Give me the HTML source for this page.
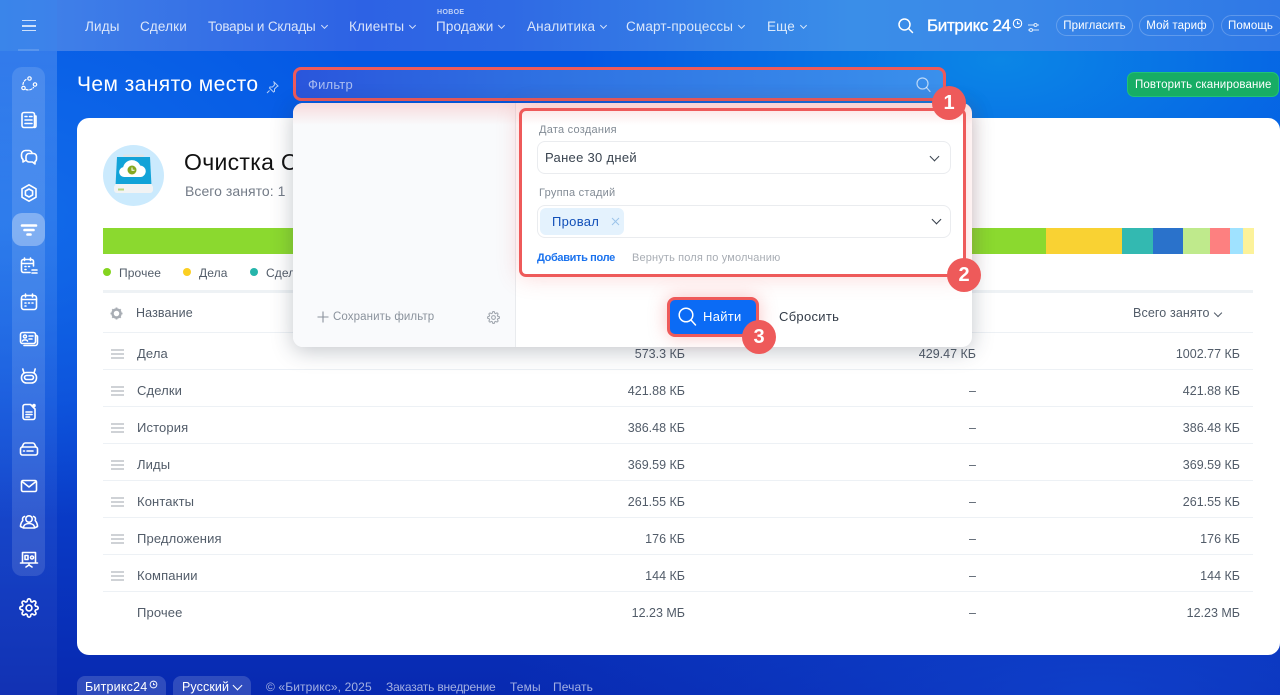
<!DOCTYPE html>
<html lang="ru"><head><meta charset="utf-8"><title>Чем занято место</title>
<style>
*{box-sizing:border-box}
html{width:1280px;height:695px;overflow:hidden;margin:0;padding:0;background:#0a3cc4}
body{margin:0;padding:0;width:1280px;height:695px;overflow:hidden;position:relative;font-family:"Liberation Sans",sans-serif;
background:
radial-gradient(420px 200px at 1000px 60px,#0b86e6 0%,rgba(11,120,230,0) 100%),
radial-gradient(600px 200px at 1100px 695px,rgba(20,80,220,.55) 0%,rgba(20,80,220,0) 100%),
radial-gradient(420px 300px at 0px 220px,rgba(20,110,235,.9) 0%,rgba(20,110,235,0) 100%),
linear-gradient(180deg,#0358e4 0px,#0358e4 130px,#0a46d4 400px,#0829b0 695px);}
.a{position:absolute;white-space:nowrap}
.w{color:#fff}
.n{top:18px;font-size:13.5px;line-height:17px;color:rgba(255,255,255,.82);letter-spacing:.15px}
.c{display:inline-block;width:5px;height:5px;border-right:1px solid rgba(255,255,255,.8);border-bottom:1px solid rgba(255,255,255,.8);transform:rotate(45deg);margin-left:6px;position:relative;top:-3px}
.p{top:15px;height:21px;border:1px solid rgba(255,255,255,.22);border-radius:11px;font-size:11.5px;line-height:20px;color:#fff;text-align:center;letter-spacing:.1px}
.r{font-size:13px;line-height:16px;color:#525c69;letter-spacing:.12px}
.v{font-size:12.5px;line-height:16px;color:#525c69;text-align:right}
.l{left:103px;width:1150px;height:1px;background:#edf1f5}
.h{left:111px;width:13px;height:10px;border-top:2px solid #cfd2d6;border-bottom:2px solid #cfd2d6}
.h:after{content:"";position:absolute;left:0;right:0;top:2px;height:2px;background:#cfd2d6}
.ic{position:absolute;left:19px;width:20px;height:20px;fill:none;stroke:#fff;stroke-width:1.6;stroke-linecap:round;stroke-linejoin:round}
.d{width:8px;height:8px;border-radius:50%;top:268px}
.num{width:34px;height:34px;border-radius:50%;background:#ee5a5a;color:#fff;font-weight:bold;font-size:20px;line-height:34px;text-align:center}
.f{font-size:12px;line-height:15px;color:rgba(255,255,255,.62);top:680px;letter-spacing:.12px}
</style></head><body>

<!-- sidebar / header overlays -->
<div class="a" style="left:0;top:0;width:57px;height:695px;background:linear-gradient(180deg,rgba(255,255,255,.18),rgba(255,255,255,.06) 60%,rgba(255,255,255,.04))"></div>
<div class="a" style="left:57px;top:0;width:1223px;height:51px;background:linear-gradient(90deg,#3f7fe8 0%,#2d62e4 25%,#2f6ae4 37%,#3a8ee8 65%,#3a88e8 78%,#2f78e6 100%)"></div>
<div class="a" style="left:0;top:0;width:57px;height:51px;background:linear-gradient(90deg,#3a85ea,#3d82ea)"></div>
<div class="a" style="left:22px;top:20px;width:14px;height:11px;border-top:1.5px solid rgba(255,255,255,.75);border-bottom:1.5px solid rgba(255,255,255,.75)"></div>
<div class="a" style="left:22px;top:25px;width:14px;height:1.5px;background:rgba(255,255,255,.75)"></div>
<div class="a" style="left:18px;top:49px;width:21px;height:2px;background:rgba(255,255,255,.15)"></div>

<div class="a" style="left:12px;top:67px;width:33px;height:509px;border-radius:10px;background:rgba(255,255,255,.12)"></div>
<div class="a" style="left:12px;top:213px;width:33px;height:33px;border-radius:10px;background:rgba(255,255,255,.32)"></div>

<!-- sidebar icons -->
<svg class="ic" style="top:74px;stroke-width:1.2" viewBox="0 0 20 20"><circle cx="10.500" cy="4.500" r="1.700"/><circle cx="4.500" cy="14" r="1.700"/><circle cx="16" cy="10.500" r="1.700"/><path d="M4 10.500C4.200 8.200 5.500 6.200 7.500 5.200M7 15.500c2.800 1 5.500.3 7.500-2" stroke-dasharray="2.200 1.600"/></svg>
<svg class="ic" style="top:110px" viewBox="0 0 20 20"><rect x="3" y="2.500" width="12.500" height="15" rx="2"/><path d="M15.500 6H17v10a1.500 1.500 0 0 1-1.500 1.500M6 6.500h2M10.500 6.500h2.500M6 10h7M6 13.500h7"/></svg>
<svg class="ic" style="top:147px" viewBox="0 0 20 20"><path d="M6.500 13.500L4 15v-2.500A4.500 4.500 0 0 1 2.500 9V7.500A4 4 0 0 1 6.500 3.500h3.500A3.500 3.500 0 0 1 13 6"/><path d="M10 6.500h4.500a3 3 0 0 1 3 3V12a3 3 0 0 1-1.500 2.600V17l-2.500-2H10a3 3 0 0 1-3-3V9.500a3 3 0 0 1 3-3z"/></svg>
<svg class="ic" style="top:183px" viewBox="0 0 20 20"><path d="M10 1.800l7 4v8.400l-7 4-7-4V5.800z"/><path d="M10 6l3.600 2v4L10 14l-3.600-2V8z"/></svg>
<svg class="ic" style="top:220px" viewBox="0 0 20 20"><path d="M3 5.500h14" stroke-width="2.600"/><path d="M5.500 10h9" stroke-width="2.600"/><path d="M8.500 14.500h3" stroke-width="2.600"/></svg>
<svg class="ic" style="top:256px" viewBox="0 0 20 20"><path d="M11 16.500H4.500a2 2 0 0 1-2-2V5.500a2 2 0 0 1 2-2h8a2 2 0 0 1 2 2v4.500M2.500 7.500h12M5.500 2v2.500M11.500 2v2.500M6 10.500h1M9.500 10.500h1M6 13.500h1M13 14h5M13 17h5"/></svg>
<svg class="ic" style="top:292px" viewBox="0 0 20 20"><rect x="2.500" y="3.500" width="15" height="14" rx="2.500"/><path d="M2.500 7.500h15M6.500 2v3M13.500 2v3M6 11h1M9.500 11h1M13 11h1M6 14h1"/></svg>
<svg class="ic" style="top:329px" viewBox="0 0 20 20"><rect x="1.500" y="3.500" width="15" height="11" rx="2"/><path d="M17.500 6.500a1.500 1.500 0 0 1 1 1.500v6a2.500 2.500 0 0 1-2.500 2.500H5M10 7h4M10 10h3"/><circle cx="6" cy="7.500" r="1.500"/><path d="M3.500 12c.5-1.500 4.500-1.500 5 0"/></svg>
<svg class="ic" style="top:366px" viewBox="0 0 20 20"><rect x="2.500" y="6.500" width="15" height="10.500" rx="5"/><rect x="5.500" y="9.500" width="9" height="4" rx="2"/><path d="M5 7L3.800 3M15 7l1.200-4"/></svg>
<svg class="ic" style="top:402px" viewBox="0 0 20 20"><path d="M11.500 2.500H6A2 2 0 0 0 4 4.500v11a2 2 0 0 0 2 2h8a2 2 0 0 0 2-2V7z"/><path d="M7 10h6M7 12.500h6M7 15h3.500"/><circle cx="15" cy="3.500" r="1" fill="#fff"/></svg>
<svg class="ic" style="top:439px" viewBox="0 0 20 20"><rect x="1.500" y="8" width="17" height="8" rx="2"/><path d="M3 8l1.500-3a2 2 0 0 1 1.800-1h7.400a2 2 0 0 1 1.800 1L17 8M4.500 12h1M8 12h6"/></svg>
<svg class="ic" style="top:476px" viewBox="0 0 20 20"><rect x="2.500" y="4.500" width="15" height="11" rx="1.500"/><path d="M3 5.500l7 5.500 7-5.500"/></svg>
<svg class="ic" style="top:512px" viewBox="0 0 20 20"><circle cx="10" cy="7" r="3.200"/><path d="M4.500 16c0-3 2.500-4.500 5.500-4.500s5.500 1.500 5.500 4.500zM5.500 4.500C3.800 5 3 6.500 3.800 8.500 2.500 10 1.500 12 1.500 14.500l2 1M14.500 4.500c1.700.5 2.500 2 1.700 4 1.300 1.500 2.300 3.500 2.300 6l-2 1"/></svg>
<svg class="ic" style="top:549px" viewBox="0 0 20 20"><path d="M3.500 14V3.500h13V14M1.500 14h17M10 14v2M7 18l3-2 3 2"/><rect x="6" y="6.500" width="3" height="4"/><circle cx="13" cy="8.500" r="1.500"/></svg>
<svg class="a" style="left:19px;top:598px" width="20" height="20" viewBox="0 0 24 24" fill="none" stroke="#fff" stroke-width="2" stroke-linecap="round" stroke-linejoin="round"><circle cx="12" cy="12" r="3.500"/><path d="M19.400 15a1.650 1.650 0 0 0 .33 1.820l.06.06a2 2 0 0 1 0 2.830 2 2 0 0 1-2.830 0l-.06-.06a1.650 1.650 0 0 0-1.820-.33 1.650 1.650 0 0 0-1 1.510V21a2 2 0 0 1-2 2 2 2 0 0 1-2-2v-.09A1.650 1.650 0 0 0 9 19.400a1.650 1.650 0 0 0-1.820.33l-.06.06a2 2 0 0 1-2.830 0 2 2 0 0 1 0-2.830l.06-.06a1.650 1.650 0 0 0 .33-1.820 1.650 1.650 0 0 0-1.510-1H3a2 2 0 0 1-2-2 2 2 0 0 1 2-2h.09A1.650 1.650 0 0 0 4.600 9a1.650 1.650 0 0 0-.33-1.820l-.06-.06a2 2 0 0 1 0-2.830 2 2 0 0 1 2.830 0l.06.06a1.650 1.650 0 0 0 1.820.33H9a1.650 1.650 0 0 0 1-1.510V3a2 2 0 0 1 2-2 2 2 0 0 1 2 2v.09a1.650 1.650 0 0 0 1 1.510 1.650 1.650 0 0 0 1.820-.33l.06-.06a2 2 0 0 1 2.830 0 2 2 0 0 1 0 2.830l-.06.06a1.650 1.650 0 0 0-.33 1.820V9a1.650 1.650 0 0 0 1.510 1H21a2 2 0 0 1 2 2 2 2 0 0 1-2 2h-.09a1.650 1.650 0 0 0-1.510 1z"/></svg>

<!-- top nav -->
<span class="a n" style="left:85px">Лиды</span>
<span class="a n" style="left:140px">Сделки</span>
<span class="a n" style="left:208px;letter-spacing:-.18px">Товары и Склады<i class="c"></i></span>
<span class="a n" style="left:349px">Клиенты<i class="c"></i></span>
<span class="a" style="left:437px;top:9px;font-size:7px;line-height:8px;font-weight:bold;letter-spacing:.4px;color:rgba(255,255,255,.7)">НОВОЕ</span>
<span class="a n" style="left:436px">Продажи<i class="c"></i></span>
<span class="a n" style="left:527px">Аналитика<i class="c"></i></span>
<span class="a n" style="left:626px">Смарт-процессы<i class="c"></i></span>
<span class="a n" style="left:767px">Еще<i class="c"></i></span>

<svg class="a" style="left:897px;top:17px" width="17" height="17" viewBox="0 0 17 17" fill="none" stroke="#fff" stroke-width="1.500" stroke-linecap="round"><circle cx="7.500" cy="7.500" r="5.500"/><path d="M11.500 11.500l4 4"/></svg>
<span class="a" style="left:927px;top:16px;font-size:17px;line-height:20px;color:#fff;-webkit-text-stroke:.35px #fff;letter-spacing:-.35px">Битрикс 24</span>
<svg class="a" style="left:1012px;top:18px" width="11" height="11" viewBox="0 0 10 10" fill="none" stroke="#fff" stroke-width="1"><circle cx="5" cy="5" r="3.800"/><path d="M5 3v2.200h2"/></svg>
<svg class="a" style="left:1027px;top:22px" width="13" height="11" viewBox="0 0 13 11" fill="none" stroke="rgba(255,255,255,.8)" stroke-width="1"><path d="M1 3h11M1 8h11"/><circle cx="8.500" cy="3" r="1.500" fill="#3a88e8"/><circle cx="4" cy="8" r="1.500" fill="#3a88e8"/></svg>
<span class="a p" style="left:1056px;width:77px">Пригласить</span>
<span class="a p" style="left:1139px;width:75px">Мой тариф</span>
<span class="a p" style="left:1221px;width:62px;padding-right:3px">Помощь</span>

<!-- title -->
<span class="a w" style="left:77px;top:72px;font-size:21px;line-height:26px;letter-spacing:.42px">Чем занято место</span>
<svg class="a" style="left:266px;top:81px" width="13" height="13" viewBox="0 0 13 13" fill="none" stroke="rgba(255,255,255,.7)" stroke-width="1"><path d="M8 1l4 4-1 .5L8.500 8l0 2.500-1 .5-4-4 .5-1H6.500L8.500 4zM3.500 9.500L1 12"/></svg>

<!-- green button -->
<div class="a" style="left:1127px;top:72px;width:152px;height:25px;border-radius:7px;background:#17ad65;border:1px solid #1fc277;color:#fff;font-size:11.500px;line-height:24px;padding-left:7px;letter-spacing:.12px">Повторить сканирование</div>

<!-- main card -->
<div class="a" style="left:77px;top:118px;width:1203px;height:537px;background:#fff;border-radius:12px"></div>

<svg class="a" style="left:103px;top:145px" width="61" height="61" viewBox="0 0 61 61"><circle cx="30.500" cy="30.500" r="30.500" fill="#cbeafd"/><rect x="20" y="9.500" width="21" height="2.500" rx="1" fill="#dfe4e6"/><path d="M14 12h33l1.500 29h-36z" fill="#12a3d8"/><path d="M12.500 39h36l1.500 3v3a3 3 0 0 1-3 3H14a3 3 0 0 1-3-3v-3z" fill="#f1f3f4"/><rect x="15" y="43.500" width="6" height="2" fill="#b9d77c"/><path d="M21 32a5 5 0 0 1-.8-9.900 9 9 0 0 1 17-1.600A5.800 5.800 0 0 1 38 32z" fill="#fff"/><circle cx="29" cy="25" r="4.500" fill="#86a822"/><path d="M29 22.500v2.800h2.500" stroke="#fff" fill="none" stroke-width="1"/></svg>

<span class="a" style="left:184px;top:148px;font-size:23px;line-height:28px;color:#111;letter-spacing:.3px">Очистка С</span>
<span class="a" style="left:185px;top:182px;font-size:14px;line-height:18px;color:#737b87;letter-spacing:.05px">Всего занято: 1</span>

<!-- bar -->
<div class="a" style="left:103px;top:228px;width:943px;height:26px;background:#8bd92f"></div>
<div class="a" style="left:1046px;top:228px;width:76px;height:26px;background:#f9d233"></div>
<div class="a" style="left:1122px;top:228px;width:31px;height:26px;background:#33b9b1"></div>
<div class="a" style="left:1153px;top:228px;width:30px;height:26px;background:#2a72cb"></div>
<div class="a" style="left:1183px;top:228px;width:27px;height:26px;background:#bfea8c"></div>
<div class="a" style="left:1210px;top:228px;width:20px;height:26px;background:#fd8080"></div>
<div class="a" style="left:1230px;top:228px;width:13px;height:26px;background:#9fe2ff"></div>
<div class="a" style="left:1243px;top:228px;width:11px;height:26px;background:#fcf29a"></div>

<i class="a d" style="left:103px;background:#84d41f"></i><span class="a r" style="left:119px;top:265px;font-size:12px">Прочее</span>
<i class="a d" style="left:183px;background:#fbcf22"></i><span class="a r" style="left:199px;top:265px;font-size:12px">Дела</span>
<i class="a d" style="left:250px;background:#26b5ab"></i><span class="a r" style="left:266px;top:265px;font-size:12px">Сделки</span>

<!-- table -->
<div class="a" style="left:103px;top:290px;width:1150px;height:3px;background:#eef2f5"></div>
<svg class="a" style="left:110px;top:307px" width="13" height="13" viewBox="0 0 13 13"><circle cx="6.500" cy="6.500" r="4" fill="none" stroke="#a8adb4" stroke-width="2.500"/><path d="M6.500 .5v2M6.500 10.500v2M.5 6.500h2M10.500 6.500h2M2.300 2.300l1.400 1.400M9.300 9.300l1.400 1.400M2.300 10.700l1.400-1.400M9.300 3.700l1.400-1.400" stroke="#a8adb4" stroke-width="1.800"/></svg>
<span class="a r" style="left:136px;top:305px;font-size:12.500px">Название</span>
<span class="a r" style="left:1133px;top:305px;font-size:12.500px">Всего занято</span>
<i class="a" style="left:1215px;top:310px;width:6px;height:6px;border-right:1.200px solid #525c69;border-bottom:1.200px solid #525c69;transform:rotate(45deg)"></i>

<div class="a l" style="top:332px"></div><div class="a l" style="top:369px"></div><div class="a l" style="top:406px"></div><div class="a l" style="top:443px"></div><div class="a l" style="top:480px"></div><div class="a l" style="top:517px"></div><div class="a l" style="top:554px"></div><div class="a l" style="top:591px"></div>

<i class="a h" style="top:349px"></i><span class="a r" style="left:137px;top:346px">Дела</span>
<i class="a h" style="top:386px"></i><span class="a r" style="left:137px;top:383px">Сделки</span>
<i class="a h" style="top:423px"></i><span class="a r" style="left:137px;top:420px">История</span>
<i class="a h" style="top:460px"></i><span class="a r" style="left:137px;top:457px">Лиды</span>
<i class="a h" style="top:497px"></i><span class="a r" style="left:137px;top:494px">Контакты</span>
<i class="a h" style="top:534px"></i><span class="a r" style="left:137px;top:531px">Предложения</span>
<i class="a h" style="top:571px"></i><span class="a r" style="left:137px;top:568px">Компании</span>
<span class="a r" style="left:137px;top:605px">Прочее</span>

<span class="a v" style="right:595px;top:346px">573.3 КБ</span><span class="a v" style="right:304px;top:346px">429.47 КБ</span><span class="a v" style="right:40px;top:346px">1002.77 КБ</span>
<span class="a v" style="right:595px;top:383px">421.88 КБ</span><span class="a v" style="right:304px;top:383px">–</span><span class="a v" style="right:40px;top:383px">421.88 КБ</span>
<span class="a v" style="right:595px;top:420px">386.48 КБ</span><span class="a v" style="right:304px;top:420px">–</span><span class="a v" style="right:40px;top:420px">386.48 КБ</span>
<span class="a v" style="right:595px;top:457px">369.59 КБ</span><span class="a v" style="right:304px;top:457px">–</span><span class="a v" style="right:40px;top:457px">369.59 КБ</span>
<span class="a v" style="right:595px;top:494px">261.55 КБ</span><span class="a v" style="right:304px;top:494px">–</span><span class="a v" style="right:40px;top:494px">261.55 КБ</span>
<span class="a v" style="right:595px;top:531px">176 КБ</span><span class="a v" style="right:304px;top:531px">–</span><span class="a v" style="right:40px;top:531px">176 КБ</span>
<span class="a v" style="right:595px;top:568px">144 КБ</span><span class="a v" style="right:304px;top:568px">–</span><span class="a v" style="right:40px;top:568px">144 КБ</span>
<span class="a v" style="right:595px;top:605px">12.23 МБ</span><span class="a v" style="right:304px;top:605px">–</span><span class="a v" style="right:40px;top:605px">12.23 МБ</span>

<!-- filter bar -->
<div class="a" style="left:293px;top:67px;width:653px;height:34px;border-radius:8px;border:3.500px solid #ee5a5a;background:linear-gradient(90deg,#2a56dc 0%,#2f72e2 40%,#3a90ec 100%)"></div>
<span class="a" style="left:308px;top:77px;font-size:13px;line-height:16px;color:rgba(255,255,255,.6);letter-spacing:.2px">Фильтр</span>
<svg class="a" style="left:916px;top:77px" width="15" height="16" viewBox="0 0 15 16" fill="none" stroke="rgba(255,255,255,.65)" stroke-width="1.200" stroke-linecap="round"><circle cx="6.500" cy="6.500" r="5.500"/><path d="M10.500 10.500l3.500 4"/></svg>

<!-- popup -->
<div class="a" style="left:293px;top:103px;width:679px;height:244px;border-radius:10px;background:#fff;box-shadow:0 4px 22px rgba(40,50,70,.28)"></div>
<div class="a" style="left:293px;top:103px;width:223px;height:244px;border-radius:10px 0 0 10px;background:#f9fafc;border-right:1px solid #e9ebee"></div>

<div class="a" style="left:293px;top:103px;width:679px;height:22px;background:linear-gradient(180deg,rgba(238,90,90,.2),rgba(238,90,90,0));border-radius:10px 10px 0 0"></div>
<div class="a" style="left:519px;top:108px;width:447px;height:169px;border-radius:7px;border:3.500px solid #ee5a5a;box-shadow:0 0 22px rgba(238,90,90,.25)"></div>

<span class="a" style="left:539px;top:123px;font-size:11px;line-height:14px;color:#828b95;letter-spacing:.25px">Дата создания</span>
<div class="a" style="left:537px;top:141px;width:414px;height:33px;border:1px solid #eaecef;border-radius:8px;background:#fff"></div>
<span class="a" style="left:545px;top:150px;font-size:13px;line-height:16px;color:#3a4450;letter-spacing:.3px">Ранее 30 дней</span>
<i class="a" style="left:931px;top:153px;width:7px;height:7px;border-right:1.300px solid #3a4450;border-bottom:1.300px solid #3a4450;transform:rotate(45deg)"></i>

<span class="a" style="left:539px;top:186px;font-size:11px;line-height:14px;color:#828b95;letter-spacing:.25px">Группа стадий</span>
<div class="a" style="left:537px;top:205px;width:414px;height:33px;border:1px solid #eaecef;border-radius:8px;background:#fff"></div>
<div class="a" style="left:540px;top:208px;width:84px;height:27px;border-radius:6px;background:#e4f2fd"></div>
<span class="a" style="left:552px;top:214px;font-size:13px;line-height:16px;color:#114fb8;letter-spacing:.3px">Провал</span>
<svg class="a" style="left:611px;top:217px" width="9" height="9" viewBox="0 0 9 9" stroke="#9cc4ea" stroke-width="1"><path d="M1 1l7 7M8 1L1 8"/></svg>
<i class="a" style="left:933px;top:216px;width:7px;height:7px;border-right:1.700px solid #333c48;border-bottom:1.700px solid #333c48;transform:rotate(45deg)"></i>

<span class="a" style="left:537px;top:251px;font-size:11px;line-height:14px;color:#1a72ee;font-weight:bold;letter-spacing:-.35px">Добавить поле</span>
<span class="a" style="left:632px;top:251px;font-size:11px;line-height:14px;color:#a8adb4;letter-spacing:.15px">Вернуть поля по умолчанию</span>

<svg class="a" style="left:317px;top:311px" width="12" height="12" viewBox="0 0 12 12" stroke="#8a929c" stroke-width="1.100"><path d="M6 .5v11M.5 6h11"/></svg>
<span class="a" style="left:333px;top:310px;font-size:11.500px;line-height:15px;color:#8a929c;letter-spacing:.1px">Сохранить фильтр</span>
<svg class="a" style="left:487px;top:311px" width="13" height="13" viewBox="0 0 24 24" fill="none" stroke="#a0a6ae" stroke-width="2"><circle cx="12" cy="12" r="3.500"/><path d="M19.400 15a1.650 1.650 0 0 0 .33 1.820l.06.06a2 2 0 0 1 0 2.830 2 2 0 0 1-2.830 0l-.06-.06a1.650 1.650 0 0 0-1.820-.33 1.650 1.650 0 0 0-1 1.510V21a2 2 0 0 1-2 2 2 2 0 0 1-2-2v-.09A1.650 1.650 0 0 0 9 19.400a1.650 1.650 0 0 0-1.820.33l-.06.06a2 2 0 0 1-2.830 0 2 2 0 0 1 0-2.830l.06-.06a1.650 1.650 0 0 0 .33-1.820 1.650 1.650 0 0 0-1.510-1H3a2 2 0 0 1-2-2 2 2 0 0 1 2-2h.09A1.650 1.650 0 0 0 4.600 9a1.650 1.650 0 0 0-.33-1.820l-.06-.06a2 2 0 0 1 0-2.830 2 2 0 0 1 2.830 0l.06.06a1.650 1.650 0 0 0 1.820.33H9a1.650 1.650 0 0 0 1-1.510V3a2 2 0 0 1 2-2 2 2 0 0 1 2 2v.09a1.650 1.650 0 0 0 1 1.510 1.650 1.650 0 0 0 1.820-.33l.06-.06a2 2 0 0 1 2.830 0 2 2 0 0 1 0 2.830l-.06.06a1.650 1.650 0 0 0-.33 1.820V9a1.650 1.650 0 0 0 1.510 1H21a2 2 0 0 1 2 2 2 2 0 0 1-2 2h-.09a1.650 1.650 0 0 0-1.510 1z"/></svg>

<!-- find button -->
<div class="a" style="left:667px;top:297px;width:92px;height:40px;border-radius:8px;border:3.500px solid #ee5a5a;background:#0b6bf5;box-shadow:0 0 18px rgba(238,90,90,.35)"></div>
<svg class="a" style="left:678px;top:307px" width="19" height="20" viewBox="0 0 19 20" fill="none" stroke="#fff" stroke-width="1.500" stroke-linecap="round"><circle cx="8" cy="8" r="6.800"/><path d="M13 13l4.500 5"/></svg>
<span class="a w" style="left:703px;top:309px;font-size:13px;line-height:16px;letter-spacing:.3px">Найти</span>
<span class="a" style="left:779px;top:309px;font-size:13px;line-height:16px;color:#333c48;letter-spacing:.3px">Сбросить</span>

<!-- numbers -->
<div class="a num" style="left:932px;top:86px">1</div>
<div class="a num" style="left:947px;top:258px">2</div>
<div class="a num" style="left:742px;top:320px">3</div>

<!-- footer -->
<div class="a" style="left:77px;top:676px;width:89px;height:19px;border-radius:8px 8px 0 0;background:rgba(255,255,255,.16);color:#fff;font-size:12.500px;line-height:23px;padding-left:8px;letter-spacing:.2px">Битрикс24</div>
<svg class="a" style="left:149px;top:680px" width="9" height="9" viewBox="0 0 8 8" fill="none" stroke="#fff" stroke-width=".8"><circle cx="4" cy="4" r="3"/><path d="M4 2.500v1.700h1.500"/></svg>
<div class="a" style="left:173px;top:676px;width:78px;height:19px;border-radius:8px 8px 0 0;background:rgba(255,255,255,.16);color:#fff;font-size:12.500px;line-height:23px;padding-left:9px;letter-spacing:.1px">Русский</div>
<i class="a" style="left:234px;top:682px;width:7px;height:7px;border-right:1.100px solid #fff;border-bottom:1.100px solid #fff;transform:rotate(45deg)"></i>
<span class="a f" style="left:266px">© «Битрикс», 2025</span>
<span class="a f" style="left:386px;letter-spacing:-.18px">Заказать внедрение</span>
<span class="a f" style="left:510px">Темы</span>
<span class="a f" style="left:553px">Печать</span>
</body></html>
